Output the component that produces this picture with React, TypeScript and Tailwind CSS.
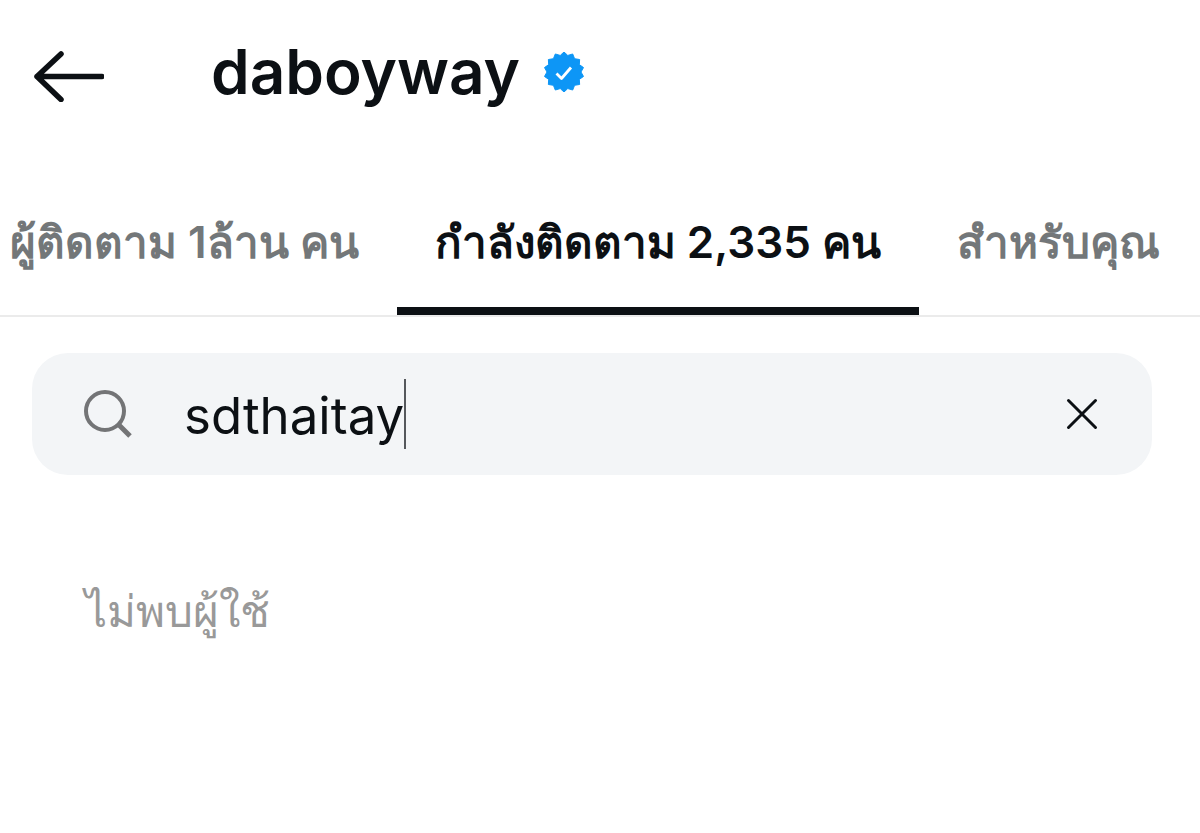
import { useState } from "react";

const tabs = [
    { id: "followers", label: "ผู้ติดตาม 1ล้าน คน", spacing: "pl-2.5 pr-[38px]" },
    { id: "following", label: "กำลังติดตาม 2,335 คน", spacing: "px-[38px]" },
    { id: "suggested", label: "สำหรับคุณ", spacing: "px-[38px]" },
];

function BackIcon() {
    return (
        <svg viewBox="0 0 72 52" className="h-[52px] w-[72px]" fill="none" stroke="currentColor" strokeWidth="5.500" strokeLinecap="round" strokeLinejoin="round" aria-hidden="true">
            <path d="M29 4 5 26.500l24 23M5 26.500h65" />
        </svg>
    );
}

// Seal outline: 14 shallow points around a circle
const sealPoints = Array.from({ length: 28 }, (_, i) => {
    const angle = (i * Math.PI) / 14 - Math.PI / 2;
    const radius = i % 2 === 0 ? 20 : 17;
    return `${(20 + radius * Math.cos(angle)).toFixed(2)},${(20 + radius * Math.sin(angle)).toFixed(2)}`;
}).join(" ");

function VerifiedBadge() {
    return (
        <svg viewBox="0 0 40 40" className="size-10 shrink-0" role="img" aria-label="Verified">
            <polygon points={sealPoints} fill="#0d96f6" stroke="#0d96f6" strokeLinejoin="round" />
            <path d="m12.500 21.500 5 5 9.500-11" fill="none" stroke="#fff" strokeWidth="2.800" strokeLinejoin="round" />
        </svg>
    );
}

function SearchIcon() {
    return (
        <svg viewBox="0 0 48 48" className="size-12 shrink-0" fill="none" stroke="#737476" strokeWidth="4" aria-hidden="true">
            <circle cx="21" cy="21" r="19" />
            <path d="m34 34 12 12" strokeWidth="5" />
        </svg>
    );
}

function CloseIcon() {
    return (
        <svg viewBox="0 0 32 32" className="size-8" fill="none" stroke="currentColor" strokeWidth="3" strokeLinecap="round" aria-hidden="true">
            <path d="m2.500 2.500 27 27M29.500 2.500l-27 27" />
        </svg>
    );
}

export default function App() {
    const [active, setActive] = useState("following");
    const [query, setQuery] = useState("sdthaitay");

    return (
        <main className="min-h-screen bg-white font-['Inter','Noto_Sans',sans-serif] text-[#0c1014]">
            <header className="flex h-[152px] items-center px-8">
                <button type="button" aria-label="Back">
                    <BackIcon />
                </button>
                <div className="ml-[107px] flex items-center gap-6 pb-2">
                    <h1 className="text-[62px] leading-none font-semibold">daboyway</h1>
                    <VerifiedBadge />
                </div>
            </header>

            <nav className="flex h-[165px] overflow-hidden border-b-2 border-[#ebebeb]">
                {tabs.map((tab) => (
                    <button
                        key={tab.id}
                        type="button"
                        onClick={() => setActive(tab.id)}
                        className={`shrink-0 border-b-8 pt-6 text-[44px] font-semibold whitespace-nowrap ${tab.spacing} ${active === tab.id ? "border-[#0c1014]" : "border-transparent text-[#737779]"}`}
                    >
                        {tab.label}
                    </button>
                ))}
            </nav>

            <section className="pt-9 pr-12 pl-8">
                <div className="flex h-[122px] items-center rounded-[36px] bg-[#f3f5f7] pr-[54px] pl-[52px]">
                    <SearchIcon />
                    <label className="ml-[52px] flex min-w-0 flex-1 items-center">
                        <input
                            aria-label="Search"
                            value={query}
                            onChange={(e) => setQuery(e.target.value)}
                            className="field-sizing-content max-w-full min-w-0 pt-1 text-[51px] caret-transparent outline-none"
                        />
                        <span className="h-[70px] w-0.5 bg-[#55585c]" aria-hidden="true" />
                    </label>
                    <button type="button" aria-label="Clear search" onClick={() => setQuery("")}>
                        <CloseIcon />
                    </button>
                </div>
                <p className="mt-[103px] pl-[53px] text-[44px] text-[#999]">ไม่พบผู้ใช้</p>
            </section>
        </main>
    );
}
